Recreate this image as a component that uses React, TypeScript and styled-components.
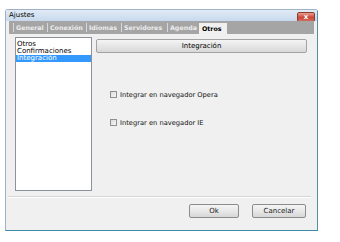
import React from 'react';
import styled, {createGlobalStyle} from 'styled-components';

const GlobalStyle = createGlobalStyle`
    html, body {
        margin: 0;
        padding: 0;
        background: #ffffff;
    }
    body {
        font-family: 'DejaVu Sans', Verdana, sans-serif;
        font-size: 7px;
        color: #000;
    }
`;

const Page = styled.div`
    width: 340px;
    height: 242px;
    padding: 9px 0 0 5px;
    box-sizing: border-box;
`;

const Window = styled.div`
    width: 313px;
    height: 222px;
    box-sizing: border-box;
    display: flex;
    flex-direction: column;
    background: #f0f0f0;
    border: 1px solid #9fb1c6;
    border-right-color: #4f8fab;
    border-bottom-color: #3f8aa6;
    border-radius: 3px 3px 0 0;
`;

const TitleBar = styled.div`
    height: 11px;
    display: flex;
    align-items: center;
    justify-content: space-between;
    padding: 0 2px 0 3px;
    background: linear-gradient(#e1ebf6, #c8d9ed);
`;

const Title = styled.span`
    font-size: 7px;
    line-height: 11px;
`;

const CloseButton = styled.div`
    width: 16px;
    height: 8px;
    margin-top: 2px;
    border: 1px solid #8e3a2d;
    border-radius: 2px;
    background: linear-gradient(#e99f92, #c9483a 55%, #d66a5b);
    color: #fff;
    font-size: 7px;
    font-weight: bold;
    line-height: 8px;
    text-align: center;
`;

const TabBar = styled.div`
    height: 13px;
    margin: 0 3px;
    display: flex;
    align-items: flex-end;
    padding-left: 4px;
    background: #a5a5a5;
`;

const Tab = styled.div<{$active?: boolean; $w: number}>`
    width: ${({$w}) => $w}px;
    height: ${({$active}) => ($active ? 11 : 9)}px;
    box-sizing: border-box;
    padding-left: ${({$active}) => ($active ? 3 : 2)}px;
    margin-bottom: ${({$active}) => ($active ? 0 : 2)}px;
    border-left: ${({$active}) => ($active ? 'none' : '1px solid #d8d8d8')};
    background: ${({$active}) => ($active ? '#f0f0f0' : 'transparent')};
    color: ${({$active}) => ($active ? '#000' : '#ececec')};
    font-weight: bold;
    font-size: 6.3px;
    line-height: ${({$active}) => ($active ? 12 : 9)}px;
    white-space: nowrap;
    overflow: hidden;
`;

const Body = styled.div`
    display: flex;
    gap: 4px;
    padding: 3px 10px 0 9px;
`;

const List = styled.div`
    width: 77px;
    height: 154px;
    box-sizing: border-box;
    border: 1px solid #8d9199;
    background: #fff;
    padding-top: 3px;
`;

const ListItem = styled.div<{$selected?: boolean}>`
    height: 7px;
    line-height: 7px;
    padding-left: 1px;
    background: ${({$selected}) => ($selected ? '#3399ff' : 'transparent')};
    color: ${({$selected}) => ($selected ? '#fff' : '#000')};
`;

const Pane = styled.div`
    flex: 1;
    display: flex;
    flex-direction: column;
`;

const HeaderButton = styled.div`
    height: 14px;
    margin-top: 2px;
    box-sizing: border-box;
    border: 1px solid #a3a3a3;
    border-radius: 2px;
    background: linear-gradient(#f5f5f5, #e6e6e6 50%, #d8d8d8);
    line-height: 12px;
    text-align: center;
`;

const Options = styled.div`
    display: flex;
    flex-direction: column;
    gap: 21px;
    padding: 38px 0 0 14px;
`;

const CheckRow = styled.label`
    display: flex;
    align-items: center;
    gap: 3px;
    height: 7px;
    font-size: 6.7px;
    color: #111;
`;

const CheckBox = styled.span`
    width: 7px;
    height: 7px;
    box-sizing: border-box;
    border: 1px solid #8f8f8f;
    background: linear-gradient(135deg, #dcdcdc, #f6f6f6);
`;

const Separator = styled.div`
    margin: 5px 6px 0 2px;
    height: 1px;
    background: #d5d5d5;
    border-bottom: 1px solid #fff;
`;

const Footer = styled.div`
    display: flex;
    justify-content: flex-end;
    gap: 13px;
    padding: 6px 11px 0 0;
`;

const Button = styled.div<{$w: number}>`
    width: ${({$w}) => $w}px;
    height: 14px;
    box-sizing: border-box;
    border: 1px solid #8c8c8c;
    border-radius: 2px;
    background: linear-gradient(#f4f4f4, #e8e8e8 50%, #d6d6d6);
    font-size: 7px;
    line-height: 12px;
    text-align: center;
    color: #222;
`;

const tabs = [
    {label: 'General', w: 34},
    {label: 'Conexión', w: 39},
    {label: 'Idiomas', w: 35},
    {label: 'Servidores', w: 46},
    {label: 'Agenda', w: 32},
    {label: 'Otros', w: 28, active: true}
];

export default function App() {
    return (
        <>
            <GlobalStyle />
            <Page>
                <Window>
                    <TitleBar>
                        <Title>Ajustes</Title>
                        <CloseButton>x</CloseButton>
                    </TitleBar>
                    <TabBar>
                        {tabs.map((t) => (
                            <Tab key={t.label} $w={t.w} $active={t.active}>
                                {t.label}
                            </Tab>
                        ))}
                    </TabBar>
                    <Body>
                        <List>
                            <ListItem>Otros</ListItem>
                            <ListItem>Confirmaciones</ListItem>
                            <ListItem $selected>Integración</ListItem>
                        </List>
                        <Pane>
                            <HeaderButton>Integración</HeaderButton>
                            <Options>
                                <CheckRow>
                                    <CheckBox />
                                    Integrar en navegador Opera
                                </CheckRow>
                                <CheckRow>
                                    <CheckBox />
                                    Integrar en navegador IE
                                </CheckRow>
                            </Options>
                        </Pane>
                    </Body>
                    <Separator />
                    <Footer>
                        <Button $w={50}>Ok</Button>
                        <Button $w={54}>Cancelar</Button>
                    </Footer>
                </Window>
            </Page>
        </>
    );
}
